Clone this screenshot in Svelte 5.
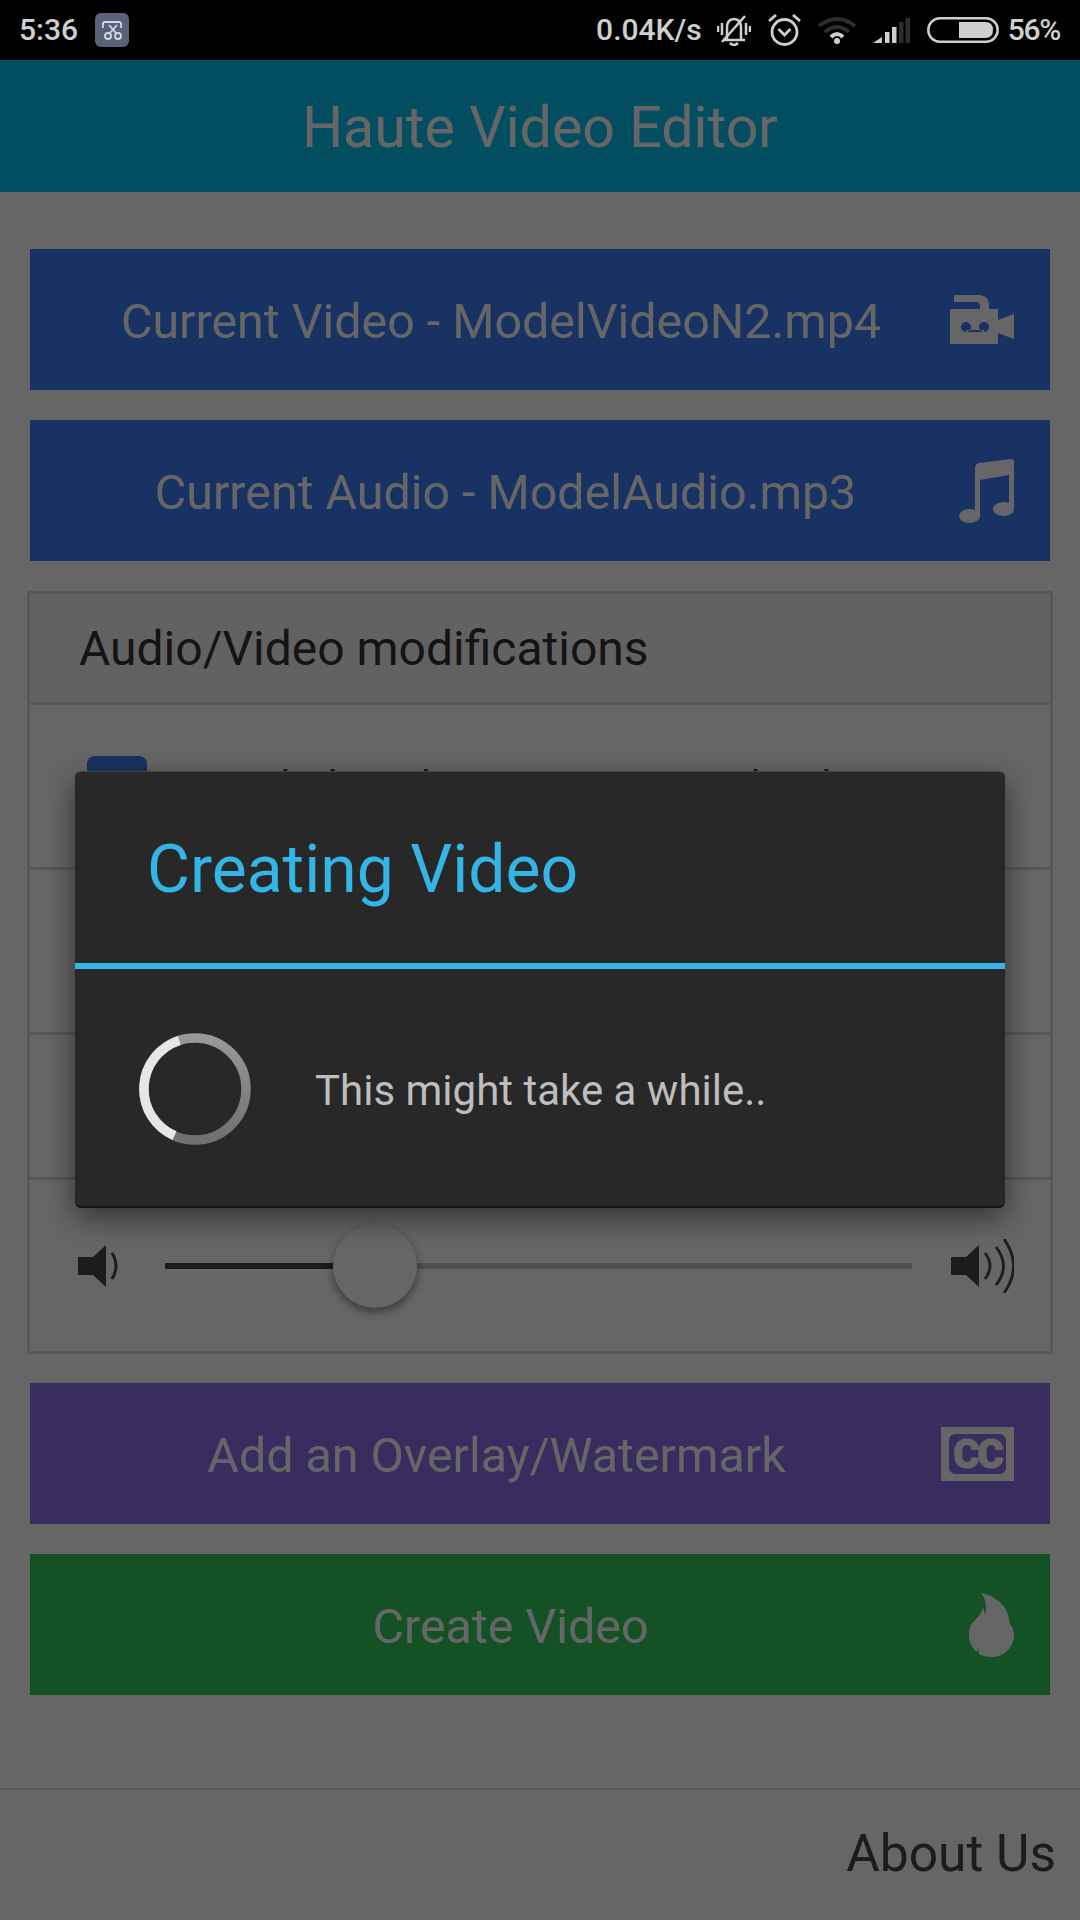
<script>
const volume = 28.1;

const actions = [
  { label: 'Current Video - ModelVideoN2.mp4', kind: 'camera', color: 'blue' },
  { label: 'Current Audio - ModelAudio.mp3', kind: 'note', color: 'blue' }
];
const bottomActions = [
  { label: 'Add an Overlay/Watermark', kind: 'cc', color: 'purple' },
  { label: 'Create Video', kind: 'flame', color: 'green' }
];
</script>

{#snippet actionButton(item)}
  <div class="action {item.color}">
    <span class="action-label">{item.label}</span>
    {#if item.kind === 'camera'}
      <svg width="64" height="49" viewBox="0 0 64 49">
        <path fill="#fff" d="M4 0H28Q39 0 39 11V14H30V12Q30 7 26 7H4Z" />
        <path fill="#fff" fill-rule="evenodd" d="M0 14H48V49H0ZM16 27a5 5 0 1 0 0 10a5 5 0 0 0 0-10ZM34 27a5 5 0 1 0 0 10a5 5 0 0 0 0-10ZM16 35V37H34V35Z" />
        <path fill="#fff" d="M48 25L64 19V44L48 38Z" />
      </svg>
    {:else if item.kind === 'note'}
      <svg width="55" height="64" viewBox="0 0 55 64">
        <path fill="#fff" d="M16 9Q16 5 20 4L52 0Q55 0 55 3V50H50V16L21 21V57H16Z" />
        <ellipse fill="#fff" cx="10.500" cy="57" rx="10.500" ry="7" />
        <ellipse fill="#fff" cx="44.500" cy="50" rx="10.500" ry="7" />
      </svg>
    {:else if item.kind === 'cc'}
      <svg width="73" height="54" viewBox="0 0 73 54">
        <path fill="#fff" fill-rule="evenodd" d="M0 0H73V54H0ZM15 7Q8 7 8 14V40Q8 47 15 47H58Q65 47 65 40V14Q65 7 58 7Z" />
        <text class="cc-text" x="36.500" y="41" text-anchor="middle">CC</text>
      </svg>
    {:else}
      <svg width="45" height="64" viewBox="0 0 45 64">
        <path fill="#fff" d="M12 0C22 1 34 9 38 19C40 24 40 28 41 31C44 35 45 38 45 42C45 54 35 64 23 64C18 64 13 63 10 61L9 54L8 59C3 55 0 49 0 42C0 33 3 30 8 25C11 22 13 19 14 14L16 22C18 14 17 6 12 0Z" />
      </svg>
    {/if}
  </div>
{/snippet}

<div class="screen">
  <div class="status-bar">
    <span class="status-text time">5:36</span>
    <svg class="app-badge" width="34" height="34" viewBox="0 0 34 34">
      <rect width="34" height="34" rx="6" fill="#5b6178" />
      <g fill="none" stroke="#d5d7de" stroke-width="1.800">
        <path d="M8 15V11Q8 9 10 9H24Q26 9 26 11V15" />
        <circle cx="13" cy="23" r="3" />
        <circle cx="23" cy="23" r="3" />
        <path d="M14.500 20.500L22 12M21.500 20.500L14 12" />
      </g>
    </svg>

    <div class="status-right">
      <span class="status-text speed">0.04K/s</span>
      <svg width="34" height="31" viewBox="0 0 34 31">
        <g fill="none" stroke="#cfcfcf" stroke-width="2.500">
          <path d="M10 24V13Q10 4 17 4Q24 4 24 13V24" />
          <path d="M6 25H28" />
          <path d="M13 28Q17 32 21 28" />
          <path d="M28 1L5 27" />
          <path d="M5 8V20M1 11V17M29 8V20M33 11V17" />
        </g>
      </svg>
      <svg width="33" height="32" viewBox="0 0 33 32">
        <g fill="none" stroke="#cfcfcf" stroke-width="2.800">
          <circle cx="16.500" cy="18" r="12.500" />
          <path d="M1 7L8 1M25 1L32 7" />
          <path d="M10.500 15L16.500 21L22.500 15" />
        </g>
      </svg>
      <svg width="38" height="27" viewBox="0 0 38 27">
        <g fill="none" stroke-width="4">
          <path stroke="#2e2e2e" d="M1 9Q19 -5 37 9" />
          <path stroke="#2e2e2e" d="M7 15Q19 5 31 15" />
          <path stroke="#cfcfcf" d="M13 20Q19 14 25 20" />
        </g>
        <circle cx="19" cy="24" r="3" fill="#cfcfcf" />
      </svg>
      <svg width="37" height="25" viewBox="0 0 37 25">
        <path fill="#cfcfcf" d="M0 25L9 19V25Z" />
        <rect x="12" y="14" width="4.500" height="11" fill="#cfcfcf" />
        <rect x="19" y="9" width="4.500" height="16" fill="#cfcfcf" />
        <rect x="26" y="4" width="4.500" height="21" fill="#2e2e2e" />
        <rect x="32.500" y="0" width="4.500" height="25" fill="#2e2e2e" />
      </svg>
      <svg class="battery" width="72" height="26" viewBox="0 0 72 26">
        <rect x="1.300" y="1.300" width="69.400" height="23.400" rx="11.700" fill="none" stroke="#cfcfcf" stroke-width="2.500" />
        <path fill="#cfcfcf" d="M32 5H58Q66 5 66 13Q66 21 58 21H32Z" />
      </svg>
      <span class="status-text percent">56%</span>
    </div>
  </div>

  <div class="app-bar">Haute Video Editor</div>

  <div class="content">
    {#each actions as item}
      {@render actionButton(item)}
    {/each}

    <div class="panel">
      <div class="panel-heading">Audio/Video modifications</div>
      <div class="panel-row check-row">
        <span class="checkbox"></span>
        <span class="check-label">Exclude Video sources on upload</span>
      </div>
      <div class="panel-row"></div>
      <div class="panel-row short"></div>
      <div class="slider-row">
        <svg width="40" height="42" viewBox="0 0 40 42">
          <path fill="#464646" d="M0 12H15L28 0V42L15 30H0Z" />
          <path fill="none" stroke="#464646" stroke-width="3" d="M34 8Q42 21 34 34" />
        </svg>
        <div class="track">
          <div class="track-fill" style="width: {volume}%"></div>
          <div class="knob" style="left: {volume}%"></div>
        </div>
        <svg width="63" height="54" viewBox="0 0 63 54">
          <path fill="#464646" d="M0 18H15L28 6V48L15 36H0Z" />
          <g fill="none" stroke="#464646" stroke-width="2.800">
            <path d="M34 14Q44 27 34 40" />
            <path d="M45 8Q60 27 45 46" />
            <path d="M53 0Q72 27 53 54" />
          </g>
        </svg>
      </div>
    </div>

    {#each bottomActions as item}
      {@render actionButton(item)}
    {/each}
  </div>

  <div class="footer">About Us</div>

  <div class="scrim">
    <div class="dialog">
      <div class="dialog-title">Creating Video</div>
      <div class="dialog-body">
        <svg width="112" height="112" viewBox="0 0 112 112">
          <defs>
            <linearGradient id="ring" x1="0" y1="0" x2="0" y2="1">
              <stop offset="0" stop-color="#989898" />
              <stop offset="1" stop-color="#707070" />
            </linearGradient>
          </defs>
          <circle cx="56" cy="56" r="51" fill="none" stroke="url(#ring)" stroke-width="9.500" />
          <path fill="none" stroke="#e6e6e6" stroke-width="9.500" d="M40.300 7.400A51 51 0 0 0 35.500 102.700" />
        </svg>
        <span class="dialog-message">This might take a while..</span>
      </div>
    </div>
  </div>
</div>

<style>
  :global(body) {
    background: #fff;
  }

  .screen {
    position: relative;
    display: flex;
    flex-direction: column;
    width: 1080px;
    height: 1920px;
    overflow: hidden;
    background: #fff;
    font-family: Roboto, "Open Sans", sans-serif;
  }

  .status-bar {
    display: flex;
    align-items: center;
    flex: 0 0 60px;
    padding: 0 20px 0 19px;
    background: #000;
    position: relative;
    z-index: 2;
  }

  .status-text {
    color: #cfcfcf;
    font-size: 30px;
    font-weight: 500;
    line-height: 1;
  }

  .time {
    margin-right: 17px;
  }

  .speed {
    margin-right: -2px;
  }

  .percent {
    letter-spacing: -1.3px;
  }

  .status-right {
    display: flex;
    align-items: center;
    gap: 17px;
    margin-left: auto;
  }

  .battery {
    margin-right: -8px;
  }

  .app-bar {
    display: flex;
    align-items: center;
    justify-content: center;
    flex: 0 0 132px;
    padding-top: 2px;
    box-sizing: border-box;
    background: #0cc3f5;
    color: #fff;
    font-size: 57.300px;
  }

  .content {
    display: flex;
    flex-direction: column;
    gap: 30px;
    padding: 57px 30px 0;
  }

  .action {
    display: flex;
    align-items: center;
    height: 141px;
    padding: 0 36px 0 22px;
    color: #fff;
    font-size: 48.400px;
  }

  .action-label {
    flex: 1;
    padding-top: 3px;
    text-align: center;
  }

  .blue {
    background: #3a7df7;
  }

  .purple {
    background: #8e6eee;
  }

  .green {
    background: #34cd5f;
  }

  .cc-text {
    fill: #fff;
    stroke: #fff;
    stroke-width: 1px;
    font-family: Roboto, sans-serif;
    font-size: 40px;
    font-weight: 900;
    letter-spacing: -2px;
  }

  .panel {
    margin: 0 -3px -1px;
    border: 3px solid #ddd;
  }

  .panel-heading {
    display: flex;
    align-items: center;
    height: 108px;
    padding-left: 49px;
    background: #f5f5f5;
    border-bottom: 3px solid #ddd;
    color: #333;
    font-size: 48px;
  }

  .panel-row {
    height: 162px;
    border-bottom: 3px solid #ddd;
  }

  .panel-row.short {
    height: 142px;
  }

  .check-row {
    display: flex;
    align-items: center;
    padding-left: 57px;
    color: #333;
    font-size: 42px;
  }

  .checkbox {
    width: 60px;
    height: 60px;
    margin-right: 67px;
    border-radius: 8px;
    background: #3a7df7;
  }

  .check-label {
    white-space: nowrap;
  }

  .slider-row {
    display: flex;
    align-items: center;
    height: 171px;
    padding-left: 48px;
  }

  .track {
    position: relative;
    width: 747px;
    height: 6px;
    margin: 0 39px 0 47px;
    background: #c8c8c8;
  }

  .track-fill {
    height: 100%;
    background: #464646;
  }

  .knob {
    position: absolute;
    top: 50%;
    width: 84px;
    height: 84px;
    border-radius: 50%;
    background: #fff;
    box-shadow: 0 4px 10px rgba(0, 0, 0, 0.45);
    transform: translate(-50%, -50%);
  }

  .footer {
    display: flex;
    align-items: center;
    justify-content: flex-end;
    box-sizing: border-box;
    height: 132px;
    margin-top: auto;
    padding: 0 24px 3px 0;
    border-top: 2px solid #e0e0e0;
    color: #464646;
    font-size: 51.500px;
  }

  .scrim {
    position: absolute;
    inset: 60px 0 0;
    box-sizing: border-box;
    padding-bottom: 1px;
    display: flex;
    align-items: center;
    justify-content: center;
    background: rgba(0, 0, 0, 0.6);
  }

  .dialog {
    display: flex;
    flex-direction: column;
    box-sizing: border-box;
    width: 930px;
    height: 437px;
    border-radius: 6px;
    border-top: 1px solid #454545;
    border-bottom: 2px solid #141414;
    background: #282828;
    box-shadow: 0 10px 30px rgba(0, 0, 0, 0.5);
  }

  .dialog-title {
    display: flex;
    align-items: center;
    box-sizing: border-box;
    height: 197px;
    padding: 4px 0 0 72px;
    border-bottom: 6px solid #33b5e5;
    color: #33b5e5;
    font-size: 66px;
  }

  .dialog-body {
    display: flex;
    align-items: center;
    flex: 1;
    gap: 64px;
    padding: 3px 0 0 64px;
  }

  .dialog-message {
    padding-top: 2px;
    color: #bebebe;
    font-size: 42px;
  }
</style>
